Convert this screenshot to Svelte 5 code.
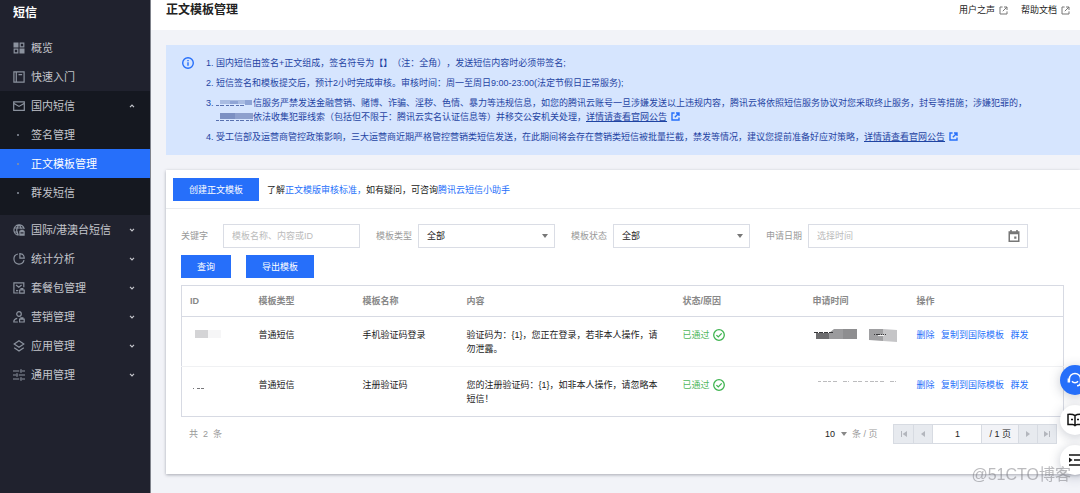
<script lang="ts">
	type MenuItem = { label: string; icon: string; children?: string[] };

	const menu: MenuItem[] = [
		{ label: '概览', icon: 'overview' },
		{ label: '快速入门', icon: 'guide' },
		{ label: '国内短信', icon: 'mail', children: ['签名管理', '正文模板管理', '群发短信'] },
		{ label: '国际/港澳台短信', icon: 'globe', children: [] },
		{ label: '统计分析', icon: 'chart', children: [] },
		{ label: '套餐包管理', icon: 'package', children: [] },
		{ label: '营销管理', icon: 'marketing', children: [] },
		{ label: '应用管理', icon: 'layers', children: [] },
		{ label: '通用管理', icon: 'settings', children: [] }
	];

	const rows = [
		{
			type: '普通短信',
			name: '手机验证码登录',
			content: '验证码为：{1}，您正在登录，若非本人操作，请勿泄露。',
			status: '已通过'
		},
		{
			type: '普通短信',
			name: '注册验证码',
			content: '您的注册验证码：{1}，如非本人操作，请忽略本短信！',
			status: '已通过'
		}
	];

	let active = $state('正文模板管理');
	let opened = $state('国内短信');
	let keyword = $state('');
	let date = $state('');
	let page = $state('1');

	const toggle = (label: string) => {
		opened = opened === label ? '' : label;
	};
</script>

{#snippet menuIcon(name: string)}
	<svg class="menu-icon" viewBox="0 0 12 12" aria-hidden="true">
		{#if name === 'overview'}
			<path class="solid" d="M.5.5h5v5h-5zM6.5 6.5h5v5h-5z" />
			<path d="M7.2 1.2h3.6v3.6H7.2zM1.2 7.2h3.6v3.6H1.2z" />
		{:else if name === 'guide'}
			<path d="M.9.9h10.2v10.2H.9zM3.3 1v10M5.5 3.6h3.6" />
		{:else if name === 'mail'}
			<path d="M.7 1.9h10.6v8.4H.7zM1 3.4l5 3 5-3" />
		{:else if name === 'globe'}
			<path d="M5.6 11.2A5.2 5.2 0 1 1 11.2 5M6 .8C3 3.8 3 8.3 5.4 11M6 .8c1.3 1.2 2 2.6 2.2 4.2M1 4h9.8M1 8h4" />
			<path class="solid" d="M6.3 6.8h1V5.7h3.4v1.1h1v4.9H6.3z" />
			<path class="cut" d="M7.5 8.9h3" />
		{:else if name === 'chart'}
			<path d="M4.9 1A5.1 5.1 0 1 0 11 7.2M6.9.7v4.5h4.4A4.7 4.7 0 0 0 6.9.7z" />
		{:else if name === 'package'}
			<path d="M5.6 11H.9V.9h9.9v4.4M3 3l2.8 2.2L8.6 3M3 8.6h2.2M6.7 8h4.5v3.2H6.7zM8 7.8V6.7h1.8v1.1" />
		{:else if name === 'marketing'}
			<circle cx="6" cy="3" r="2.3" />
			<path d="M4.9 11H.8c0-2 1.2-3.2 3.4-3.6M6.6 8.2h4.6V11H6.6zM7.9 8V6.9h2V8" />
		{:else if name === 'layers'}
			<path d="M6 .8l4.8 3.2L6 7.2 1.2 4zM1.2 7.7L6 11l4.8-3.3" />
		{:else}
			<path d="M0 2h6.2M9 2h3M8 .3v3.4M0 6h3M5.8 6H12M4 4.3v3.4M0 10h6.2M9 10h3M8 8.3v3.4" />
		{/if}
	</svg>
{/snippet}

{#snippet external()}
	<svg class="external" viewBox="0 0 9 9" aria-hidden="true">
		<path d="M3.6 1H1v7h7V5.4M5 1h3v3M8 1L3.8 5.2" />
	</svg>
{/snippet}

{#snippet pagerIcon(d: string)}
	<svg class="pager-icon" viewBox="0 0 8 8" aria-hidden="true"><path {d} /></svg>
{/snippet}

<div class="layout">
	<nav class="sidebar" aria-label="短信">
		<h2>短信</h2>
		{#each menu as item}
			{#if item.children}
				<div class="group" class:open={opened === item.label && item.children.length > 0}>
					<button class="menu-item" type="button" onclick={() => toggle(item.label)}>
						{@render menuIcon(item.icon)}
						<span>{item.label}</span>
						<svg class="chevron" viewBox="0 0 6 4" aria-hidden="true">
							<path d="M1 .8l2 2 2-2" />
						</svg>
					</button>
					{#if opened === item.label}
						{#each item.children as child}
							<a
								class="sub-item"
								class:active={active === child}
								href="#{child}"
								onclick={() => (active = child)}>{child}</a
							>
						{/each}
					{/if}
				</div>
			{:else}
				<a class="menu-item" href="#{item.label}">
					{@render menuIcon(item.icon)}
					<span>{item.label}</span>
				</a>
			{/if}
		{/each}
	</nav>

	<div class="main">
		<header>
			<h1>正文模板管理</h1>
			<div class="header-links">
				<a href="#voice">用户之声{@render external()}</a>
				<a href="#docs">帮助文档{@render external()}</a>
			</div>
		</header>

		<main>
			<section class="notice">
				<svg class="info" viewBox="0 0 12 12" aria-hidden="true">
					<circle cx="6" cy="6" r="5.3" />
					<path d="M6 5.2v3.6M6 3v1.3" />
				</svg>
				<ol>
					<li>
						<p>国内短信由签名+正文组成，签名符号为【】（注：全角），发送短信内容时必须带签名;</p>
					</li>
					<li>
						<p>短信签名和模板提交后，预计2小时完成审核。审核时间：周一至周日9:00-23:00(法定节假日正常服务);</p>
					</li>
					<li>
						<p>
							<svg class="mask" viewBox="0 0 37 10" aria-hidden="true">
								<path fill="#a9bce2" d="M4 2h32v4H4z" />
								<path fill="#8fa5d6" d="M14 3h8v3h-8zM29 2h7v5h-7z" />
								<path stroke="#5971b0" stroke-dasharray="3 1 4 2" d="M0 7.5h28" />
							</svg>信服务严禁发送金融营销、赌博、诈骗、淫秽、色情、暴力等违规信息，如您的腾讯云账号一旦涉嫌发送以上违规内容，腾讯云将依照短信服务协议对您采取终止服务，封号等措施；涉嫌犯罪的，<svg
								class="mask"
								viewBox="0 0 37 10"
								aria-hidden="true"
							>
								<path fill="#7c90c2" d="M4 1h15v6H4z" />
								<path fill="#8ea0cd" d="M19 1h18v6H19z" />
								<path stroke="#5971b0" stroke-dasharray="3 1 4 2" d="M0 8.5h37" />
							</svg>依法收集犯罪线索（包括但不限于：腾讯云实名认证信息等）并移交公安机关处理，<a
								href="#notice-law">详情请查看官网公告</a
							>{@render external()}
						</p>
					</li>
					<li>
						<p>
							受工信部及运营商管控政策影响，三大运营商近期严格管控营销类短信发送，在此期间将会存在营销类短信被批量拦截，禁发等情况，建议您提前准备好应对策略，<a
								href="#notice-policy">详情请查看官网公告</a
							>{@render external()}
						</p>
					</li>
				</ol>
			</section>

			<section class="card">
				<div class="toolbar">
					<button class="primary" type="button">创建正文模板</button>
					<p>
						了解<a href="#standard">正文模版审核标准，</a>如有疑问，可咨询<a href="#assistant"
							>腾讯云短信小助手</a
						>
					</p>
				</div>

				<div class="body">
					<form onsubmit={(e) => e.preventDefault()}>
						<div class="filters">
							<div class="field">
								<label for="keyword">关键字</label>
								<input id="keyword" type="text" placeholder="模板名称、内容或ID" bind:value={keyword} />
							</div>
							{#each ['模板类型', '模板状态'] as label}
								<div class="field">
									<label for={label}>{label}</label>
									<div class="select">
										<select id={label}><option>全部</option></select>
										<svg viewBox="0 0 6 4" aria-hidden="true"><path d="M0 0h6L3 4z" /></svg>
									</div>
								</div>
							{/each}
							<div class="field date">
								<label for="date">申请日期</label>
								<div class="select">
									<input id="date" type="text" placeholder="选择时间" bind:value={date} />
									<svg class="calendar" viewBox="0 0 12 12" aria-hidden="true">
										<path
											fill-rule="evenodd"
											d="M2.2 0h1.6v1.2h4.4V0h1.6v1.2h1.7V12H.5V1.2h1.7zM2 4.2v6.4h8V4.2zM6.2 6.5h2.2v2.2H6.2z"
										/>
									</svg>
								</div>
							</div>
						</div>
						<div class="actions">
							<button class="primary" type="submit">查询</button>
							<button class="primary" type="button">导出模板</button>
						</div>
					</form>

					<table>
						<thead>
							<tr>
								<th class="c-id">ID</th>
								<th class="c-mid">模板类型</th>
								<th class="c-mid">模板名称</th>
								<th class="c-content">内容</th>
								<th class="c-status">状态/原因</th>
								<th class="c-mid">申请时间</th>
								<th>操作</th>
							</tr>
						</thead>
						<tbody>
							{#each rows as row, i}
								<tr>
									<td>
										<svg class="id-mask" viewBox="0 0 32 14" aria-hidden="true">
											{#if i === 0}
												<path fill="#d4d4d6" d="M5 2h13v8H5z" />
												<path fill="#f6f6f7" d="M18 2h13v8H18z" />
											{:else}
												<path stroke="#77777a" stroke-dasharray="1 3 3 1 4 2" d="M3 10.5h11" />
											{/if}
										</svg>
									</td>
									<td>{row.type}</td>
									<td>{row.name}</td>
									<td>{row.content}</td>
									<td>
										<span class="status">
											{row.status}
											<svg viewBox="0 0 12 12" aria-hidden="true">
												<circle cx="6" cy="6" r="5.3" />
												<path d="M3.4 6.1l1.9 1.8 3.4-3.5" />
											</svg>
										</span>
									</td>
									<td>
										<svg class="time-mask" viewBox="0 0 86 14" aria-hidden="true">
											{#if i === 0}
												<path fill="#6c6c6e" d="M3 5h13v6H3z" />
												<path fill="#9b9b9d" d="M16 5l5-4h9v10H16z" />
												<path fill="#8e8e90" d="M30 1h14v10H30z" />
												<path fill="#a0a0a2" d="M56 1h14v12l-14-1z" />
												<path fill="#c5c5c7" d="M70 1l14 1v12l-14-1z" />
												<path stroke="#39393b" stroke-dasharray="4 1" d="M1 4.5h19" />
												<path stroke="#39393b" stroke-dasharray="1 1 4 1 1 1" d="M61 6.5h12" />
												<path stroke="#f4f4f4" d="M65 7.5h6" />
											{:else}
												<path
													stroke="#bcbcbe"
													stroke-dasharray="3 2 4 1 3 2 4 6 4 1 1 4 4 1 4 3"
													d="M5 3.5h80"
												/>
											{/if}
										</svg>
									</td>
									<td class="ops">
										<a href="#delete">删除</a>
										<a href="#copy">复制到国际模板</a>
										<a href="#send">群发</a>
									</td>
								</tr>
							{/each}
						</tbody>
					</table>

					<footer>
						<div class="total"><span>共</span> <span>2</span> <span>条</span></div>
						<label class="page-size">
							<select><option>10</option></select>
							<svg viewBox="0 0 6 4" aria-hidden="true"><path d="M0 0h6L3 4z" /></svg>
							条 / 页
						</label>
						<div class="pager">
							<button type="button" aria-label="首页" disabled>
								{@render pagerIcon('M1 1h1v6H1zM7 1v6L2.6 4z')}
							</button>
							<button type="button" aria-label="上一页" disabled>
								{@render pagerIcon('M6 1v6L2 4z')}
							</button>
							<input type="text" aria-label="页码" bind:value={page} />
							<span>/ 1 页</span>
							<button type="button" aria-label="下一页" disabled>
								{@render pagerIcon('M2 1v6l4-3z')}
							</button>
							<button type="button" aria-label="末页" disabled>
								{@render pagerIcon('M6 1h1v6H6zM1 1v6l4.4-3z')}
							</button>
						</div>
					</footer>
				</div>
			</section>
		</main>
	</div>
</div>

<div class="floating">
	<button class="round blue" type="button" aria-label="在线客服">
		<svg viewBox="0 0 16 16" aria-hidden="true">
			<path d="M2.4 10V7a5.6 5.6 0 0 1 11.2 0v3.6c0 2-1.4 3.2-3.6 3.2M5 9.2c1.4 2 4.6 2 6 0" />
			<path class="thick" d="M1.8 6.6v4M14.2 6.6v4" />
		</svg>
	</button>
	<button class="round" type="button" aria-label="文档">
		<svg viewBox="0 0 16 16" aria-hidden="true">
			<path d="M8 3.6C6.2 2.3 3.6 2.2 1 2.4v10h4.6c1 0 1.8.4 2.4 1.2.6-.8 1.4-1.2 2.4-1.2H15v-10c-2.6-.2-5.2-.1-7 1.2zM8 3.6v9.6M4 7.6h2M10 7.6h2" />
		</svg>
	</button>
	<button class="round" type="button" aria-label="展开">
		<svg viewBox="0 0 16 16" aria-hidden="true">
			<path d="M2 3h13M7 8h8M2 13h13" />
			<path class="fill" d="M2 5.6v4.8L5.6 8z" />
		</svg>
	</button>
</div>

<div class="watermark">@51CTO博客</div>

<style>
	:global(body) {
		background: #f2f3f8;
		color: #222;
		font-family: 'Liberation Sans', 'Noto Sans CJK SC', sans-serif;
		font-size: 9px;
		line-height: 14px;
		text-spacing-trim: space-all;
	}

	h1,
	h2,
	p,
	ol {
		margin: 0;
		padding: 0;
	}

	a {
		color: #2670fa;
		text-decoration: none;
	}

	button,
	input,
	select {
		box-sizing: border-box;
		margin: 0;
		border: none;
		border-radius: 0;
		padding: 0;
		background: none;
		color: inherit;
		font: inherit;
	}

	button {
		cursor: pointer;
	}

	svg {
		flex: none;
		fill: none;
	}

	.layout {
		display: flex;
		min-height: 100vh;
	}

	/* sidebar */

	.sidebar {
		flex: none;
		box-sizing: border-box;
		width: 151px;
		border-right: 1px solid #7f828b;
		background: #20222e;
		color: #c3c5cb;
		font-size: 11px;
	}

	h2 {
		padding: 3px 13px 10px;
		color: #fff;
		font-size: 12px;
		line-height: 20px;
	}

	.menu-item {
		display: flex;
		align-items: center;
		gap: 6px;
		box-sizing: border-box;
		width: 100%;
		height: 29px;
		padding: 0 15px 0 13px;
		color: inherit;
		text-align: left;
	}

	.menu-icon {
		width: 12px;
		height: 12px;
		stroke: #8b929e;
		stroke-width: 1.2;
	}

	.solid {
		fill: #8b929e;
		stroke: none;
	}

	.cut {
		stroke: #20222e;
	}

	.chevron {
		width: 6px;
		height: 4px;
		margin-left: auto;
		stroke: #c3c5cb;
		stroke-width: 1.2;
	}

	.open {
		padding-bottom: 8px;
		background: #151820;
	}

	.open .chevron {
		transform: rotate(180deg);
	}

	.sub-item {
		display: flex;
		align-items: center;
		height: 29px;
		padding-left: 17px;
		color: inherit;
	}

	.sub-item::before {
		content: '';
		width: 2px;
		height: 2px;
		margin-right: 12px;
		border-radius: 1px;
		background: #8b929e;
	}

	.active {
		background: #266ffa;
		color: #fff;
	}

	/* header */

	.main {
		flex: 1;
		min-width: 0;
	}

	header {
		display: flex;
		align-items: flex-start;
		justify-content: space-between;
		box-sizing: border-box;
		height: 30px;
		padding: 0 10px 0 15px;
		background: #fff;
	}

	h1 {
		font-size: 12px;
		line-height: 20px;
	}

	.header-links {
		display: flex;
		gap: 13px;
		line-height: 20px;
	}

	.header-links a {
		display: flex;
		align-items: center;
		gap: 4px;
		color: #222;
	}

	.external {
		width: 9px;
		height: 9px;
		stroke: #777;
	}

	/* notice */

	main {
		padding: 15px 0 19px 15px;
	}

	.notice {
		display: flex;
		gap: 12px;
		padding: 11px 50px 11px 16px;
		background: #d6e5fe;
		color: #1f44a3;
	}

	.info {
		width: 12px;
		height: 12px;
		margin-top: 1px;
		stroke: #266ffa;
		stroke-width: 1.4;
	}

	ol {
		display: grid;
		gap: 6px;
		list-style: none;
		counter-reset: notice;
	}

	li {
		display: flex;
		counter-increment: notice;
	}

	li::before {
		content: counter(notice) '.';
		flex: none;
		width: 10px;
	}

	.notice a {
		color: inherit;
		text-decoration: underline;
	}

	.notice .external {
		margin-left: 4px;
		stroke: #266ffa;
		stroke-width: 1.4;
		vertical-align: -1px;
	}

	.mask {
		width: 37px;
		height: 10px;
		vertical-align: -2px;
	}

	/* card */

	.card {
		margin-top: 15px;
		background: #fff;
		box-shadow: 0 1px 3px rgba(30, 35, 50, 0.35);
	}

	.toolbar {
		display: flex;
		align-items: center;
		gap: 8px;
		padding: 8px 7px 7px;
		border-bottom: 1px solid #e9ebee;
	}

	.primary {
		height: 23px;
		padding: 0 16px;
		background: #266ffa;
		color: #fff;
	}

	.body {
		padding: 15px 16px 30px 15px;
	}

	.filters {
		display: flex;
		flex-wrap: wrap;
		gap: 8px 16px;
	}

	.field {
		display: flex;
		align-items: center;
	}

	.field label {
		width: 42px;
		color: #999;
	}

	.field input,
	.field select {
		width: 137px;
		height: 24px;
		padding: 0 8px;
		border: 1px solid #dadde5;
		appearance: none;
	}

	.field.date input {
		width: 220px;
	}

	input::placeholder {
		color: #bbb;
		opacity: 1;
	}

	.select {
		position: relative;
		display: flex;
	}

	.select svg {
		position: absolute;
		top: 10px;
		right: 7px;
		width: 6px;
		height: 4px;
		fill: #777;
		pointer-events: none;
	}

	.select .calendar {
		top: 6px;
		right: 8px;
		width: 12px;
		height: 12px;
	}

	.actions {
		display: flex;
		gap: 15px;
		margin: 7px 0;
	}

	table {
		width: 100%;
		border: 1px solid #d7dae3;
		border-collapse: collapse;
		table-layout: fixed;
	}

	th,
	td {
		box-sizing: border-box;
		padding: 11px 8px 10px;
		text-align: left;
		vertical-align: top;
	}

	th {
		padding: 8px;
		border-bottom: 1px solid #d7dae3;
		color: #888;
	}

	tr + tr td {
		border-top: 1px solid #f0f1f3;
	}

	.c-id {
		width: 69px;
	}

	.c-mid {
		width: 104px;
	}

	.c-content {
		width: 216px;
	}

	.c-status {
		width: 130px;
	}

	.status {
		display: flex;
		align-items: center;
		gap: 3px;
		color: #50b85c;
	}

	.status svg {
		width: 12px;
		height: 12px;
		stroke: #3fb450;
		stroke-width: 1.3;
	}

	.id-mask {
		display: block;
		width: 32px;
		height: 14px;
	}

	.time-mask {
		display: block;
		width: 86px;
		height: 14px;
	}

	.ops a {
		margin-right: 4px;
	}

	footer {
		display: flex;
		align-items: center;
		margin-top: 7px;
		padding: 0 7px 0 8px;
		color: #999;
	}

	.total {
		display: flex;
		gap: 5px;
		margin-right: auto;
	}

	.page-size {
		display: flex;
		align-items: center;
		gap: 5px;
		margin-right: 16px;
	}

	.page-size select {
		color: #222;
		appearance: none;
	}

	.page-size svg {
		width: 6px;
		height: 4px;
		fill: #888;
	}

	.pager {
		display: flex;
		box-sizing: border-box;
		height: 20px;
		border: 1px solid #d7dbe2;
		background: #f2f3f7;
		color: #222;
	}

	.pager > * + * {
		border-left: 1px solid #d7dbe2;
	}

	.pager button {
		display: grid;
		place-items: center;
		width: 19px;
		background: #e7eaef;
	}

	.pager input {
		width: 49px;
		background: #fff;
		text-align: center;
	}

	.pager span {
		padding: 0 7px;
		line-height: 18px;
	}

	.pager-icon {
		width: 8px;
		height: 8px;
		fill: #b3b6bd;
	}

	/* overlays */

	.floating {
		position: fixed;
		right: -10px;
		bottom: 18px;
		display: grid;
		gap: 10px;
	}

	.round {
		display: grid;
		place-items: center;
		width: 30px;
		height: 30px;
		border-radius: 50%;
		background: #fff;
		box-shadow: 0 2px 12px rgba(55, 65, 90, 0.28);
	}

	.round svg {
		width: 16px;
		height: 16px;
		stroke: #111;
		stroke-width: 1.5;
	}

	.blue {
		background: #266ffa;
	}

	.blue svg {
		stroke: #fff;
	}

	.thick {
		stroke-width: 2.4;
	}

	.round .fill {
		fill: #111;
		stroke: none;
	}

	.watermark {
		position: fixed;
		right: 9px;
		bottom: 8px;
		color: rgba(120, 120, 125, 0.5);
		font-size: 16px;
		line-height: 20px;
		pointer-events: none;
	}
</style>
